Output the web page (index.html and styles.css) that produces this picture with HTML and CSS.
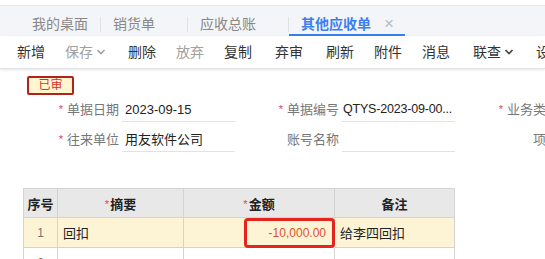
FILE: index.html
```html
<!DOCTYPE html>
<html lang="zh">
<head>
<meta charset="utf-8">
<link rel="stylesheet" href="styles.css">
</head>
<body>
<div class="page">
  <div class="topstrip"></div>
  <div class="tabbar">
    <div class="tab home">我的桌面</div>
    <span class="tsep"></span>
    <div class="tab">销货单<span class="tclose hidden">×</span></div>
    <span class="tsep"></span>
    <div class="tab">应收总账<span class="tclose hidden">×</span></div>
    <span class="tsep"></span>
    <div class="tab active">其他应收单<span class="tclose">×</span></div>
  </div>
  <div class="toolbar">
    <span class="tbtn">新增</span>
    <span class="tbtn dis">保存<svg class="chev" viewBox="0 0 10 6"><polyline points="1.5,1 5,4.5 8.5,1"/></svg></span>
    <span class="tbtn">删除</span>
    <span class="tbtn dis">放弃</span>
    <span class="tbtn">复制</span>
    <span class="bsep"></span>
    <span class="tbtn">弃审</span>
    <span class="bsep"></span>
    <span class="tbtn">刷新</span>
    <span class="tbtn">附件</span>
    <span class="tbtn">消息</span>
    <span class="bsep"></span>
    <span class="tbtn">联查<svg class="chev dark" viewBox="0 0 10 6"><polyline points="1.5,1 5,4.5 8.5,1"/></svg></span>
    <span class="tbtn">设置</span>
  </div>
  <div class="content">
    <div class="badge">已审</div>
    <div class="frow">
      <div class="field"><label class="lbl"><i class="req">*</i>单据日期</label><div class="inp">2023-09-15</div></div>
      <div class="field"><label class="lbl"><i class="req">*</i>单据编号</label><div class="inp tight">QTYS-2023-09-00...</div></div>
      <div class="field"><label class="lbl"><i class="req">*</i>业务类型</label><div class="inp"></div></div>
    </div>
    <div class="frow">
      <div class="field"><label class="lbl"><i class="req">*</i>往来单位</label><div class="inp">用友软件公司</div></div>
      <div class="field"><label class="lbl">账号名称</label><div class="inp"></div></div>
      <div class="field"><label class="lbl">项目</label><div class="inp"></div></div>
    </div>
    <table class="grid">
      <colgroup><col class="c1"><col class="c2"><col class="c3"><col class="c4"></colgroup>
      <thead>
        <tr><th>序号</th><th><i class="req">*</i>摘要</th><th><i class="req">*</i>金额</th><th>备注</th></tr>
      </thead>
      <tbody>
        <tr class="cur"><td class="num">1</td><td>回扣</td><td class="amt"><div class="editor">-10,000.00</div></td><td>给李四回扣</td></tr>
        <tr><td class="num">2</td><td></td><td></td><td></td></tr>
      </tbody>
    </table>
  </div>
</div>
</body>
</html>
```

FILE: styles.css
```css
* { box-sizing: border-box; }
html, body { margin: 0; padding: 0; }
body {
  width: 545px;
  height: 259px;
  overflow: hidden;
  background: #fff;
  font-family: "Liberation Sans", "Noto Sans CJK SC", sans-serif;
  color: #333;
}
.page { width: 545px; overflow: hidden; }

.topstrip { height: 6px; background: #fff; border-bottom: 1px solid #e3e6eb; }

.tabbar {
  display: flex;
  align-items: flex-start;
  height: 30px;
  padding-left: 20px;
  background: #f3f5f9;
  white-space: nowrap;
}
.tab {
  height: 30px;
  padding: 8px 12px 0 12px;
  line-height: 20px;
  font-size: 14px;
  color: #888;
  display: flex;
  align-items: flex-start;
}
.tab.active {
  color: #3a7ef0;
  font-weight: bold;
  border-bottom: 2px solid #3a7ef0;
}
.tclose {
  margin-left: 11px;
  width: 9px;
  font-size: 17px;
  font-weight: normal;
  color: #b8bcc2;
  line-height: 20px;
}
.tab.active .tclose { margin-left: 13px; }
.tclose.hidden { visibility: hidden; }
.tsep {
  width: 1px;
  height: 15px;
  margin-top: 11px;
  background: #dfe2e7;
}

.toolbar {
  display: flex;
  align-items: center;
  height: 33px;
  padding-left: 7px;
  background: #fff;
  border-bottom: 1px solid #e2e2e2;
  box-shadow: 0 1px 3px rgba(0,0,0,0.10);
  white-space: nowrap;
  position: relative;
}
.tbtn {
  display: flex;
  align-items: center;
  padding: 0 10px;
  font-size: 14px;
  line-height: 20px;
  color: #333;
}
.tbtn.dis { color: #a0a0a0; }
.chev {
  width: 10px;
  height: 6px;
  margin-left: 3px;
  margin-right: 2px;
  fill: none;
  stroke: #a0a0a0;
  stroke-width: 1.7;
}
.chev.dark { stroke: #444; }
.bsep {
  width: 1px;
  height: 13px;
  margin: 0 1px 0 2px;
  background: #dcdcdc;
}

.content { padding-top: 7px; }
.badge {
  margin-left: 27px;
  width: 47px;
  height: 19px;
  border: 2px solid #b3211b;
  border-radius: 2px;
  background: #fff6cf;
  color: #d8312a;
  font-size: 12px;
  line-height: 15px;
  text-align: center;
}

.frow {
  display: flex;
  height: 30px;
  align-items: center;
  margin-left: 51px;
  white-space: nowrap;
}
.field {
  display: flex;
  align-items: center;
  width: 220px;
  flex: none;
}
.lbl {
  width: 68px;
  text-align: right;
  font-size: 13px;
  color: #777;
  line-height: 18px;
}
.req {
  font-style: normal;
  color: #e0464a;
  font-size: 11px;
  margin-right: 4px;
  position: relative;
  top: -1px;
}
.inp {
  width: 113px;
  height: 24px;
  margin-left: 3px;
  padding-left: 3px;
  border-bottom: 1px solid #e2e2e2;
  font-size: 13px;
  line-height: 23px;
  color: #222;
  overflow: hidden;
  white-space: nowrap;
}
.inp.tight { font-size: 12.5px; letter-spacing: -0.2px; padding-left: 1px; }

.grid {
  margin: 33px 0 0 23px;
  border-collapse: collapse;
  table-layout: fixed;
  width: 431px;
  font-size: 13px;
}
.c1 { width: 34px; }
.c2 { width: 126px; }
.c3 { width: 151px; }
.c4 { width: 120px; }
.grid th, .grid td {
  border: 1px solid #d3d3d3;
  padding: 0;
  white-space: nowrap;
}
.grid th {
  height: 29px;
  background: #e8e8e8;
  color: #222;
  font-weight: bold;
  text-align: center;
}
.grid th .req { font-weight: normal; margin-right: 1px; }
.grid td {
  height: 30px;
  padding: 0 5px;
  color: #222;
}
.grid tr.cur td { background: #fdf4d6; }
.grid td.num { text-align: center; color: #777; padding: 0; font-size: 12px; }
.grid td.amt { padding: 0; text-align: right; }
.editor {
  display: inline-block;
  width: 91px;
  height: 30px;
  margin: -1px -1px -1px 0;
  border: 3px solid #e5241d;
  border-radius: 4px;
  padding-right: 6px;
  font-size: 12px;
  line-height: 24px;
  color: #e2502c;
  text-align: right;
  vertical-align: middle;
}
```
